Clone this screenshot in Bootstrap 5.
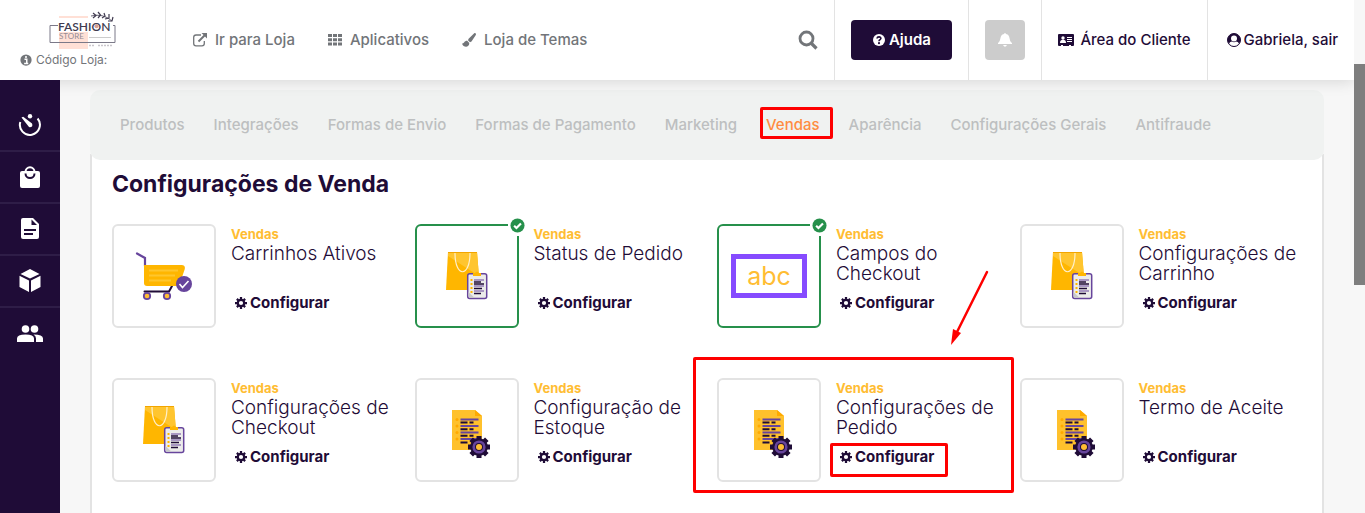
<!DOCTYPE html>
<html lang="pt-BR">
<head>
<meta charset="utf-8">
<meta name="viewport" content="width=device-width, initial-scale=1">
<title>Configurações de Venda</title>
<link href="https://cdn.jsdelivr.net/npm/bootstrap@5.3.0/dist/css/bootstrap.min.css" rel="stylesheet">
<style>
:root{--ink:#1f0c37;--grey:#727579;--line:#e3e3e3;--gold:#ffbd33;--mark:#fe0000}
body{font-family:Inter,"Open Sans",sans-serif;background:#f7f7f7;color:var(--ink);font-size:14px;line-height:20px}
a{text-decoration:none;color:inherit}
svg{flex:none;display:block}
.topbar{height:80px;background:#fff;box-shadow:0 2px 14px rgba(0,0,0,.13);z-index:2;font-size:15px;font-weight:500}
.cell{border-left:1px solid var(--line);padding:0 16px}
.brand-cell{width:165px;padding:10px 0 0 20px;color:var(--grey);font-size:12px;font-weight:400;line-height:20px}
.logo{margin-left:28px}
.top-links{color:var(--grey);gap:33px;padding-left:27px}
.btn-help{width:101px;height:40px;background:var(--ink);color:#fff;border-radius:4px;font-weight:600;border:0}
.btn-bell{width:40px;height:40px;background:#ccc;color:#fff;border-radius:4px;border:0}
.btn-plain{border:0;background:none;color:var(--grey);padding:0}
.client{gap:6px}
.user{gap:3px;padding-left:19px}
.rail{width:60px;background:var(--ink);color:#fff;padding-top:20px;z-index:3}
.rail a{height:52px;border-bottom:2px solid #2e1d47}
.rail a:last-child{border:0;height:52px}
.content-area{padding:10px 30px 0}
.tabs{height:70px;background:#f0f2f1;border-radius:10px;padding:0 30px;gap:29px;font-size:15px;font-weight:500;color:#bdbfc0;position:relative;z-index:1}
.tabs a{white-space:nowrap}
.tabs .active{color:#ff8c42}
.panel{margin-top:-6px;background:#fff;border:2px solid var(--line);border-top:0;border-bottom:0;padding:19px 20px 0}
.panel h1{font-size:23px;line-height:22px;font-weight:700;margin:0 0 29px}
.grid{--bs-gutter-x:20px;row-gap:50px}
.thumb{width:104px;height:104px;border:2px solid var(--line);border-radius:6px;flex:none}
.thumb.on{border-color:#26904b}
.tick{top:-8px;right:-8px;background:#fff;padding:0 0 3px 2px}
.info{padding-left:15px}
.kind{color:var(--gold);font-size:13px;font-weight:700;line-height:20px;display:block}
.name{font-size:19px;font-weight:300;line-height:20px;height:40px;margin:0}
.conf{font-size:15px;font-weight:700;gap:3px;margin:9px 0 0 4px}
.abc{width:76px;height:44px;border:5px solid #864bff;color:var(--gold);font-size:25px;line-height:34px}
.box{position:absolute;border:3px solid var(--mark);border-radius:2px;pointer-events:none}
.box-tab{inset:-8px -13px -4px -6px}
.box-card{inset:-21px -14px -11px -24px}
.box-conf{inset:-4px -14px -10px -10px}
.arrow{position:absolute;left:232px;top:-109px}
.track{width:11px;background:#f7f7f7}
.grip{height:43%;margin-top:64px;background:#7e7e7e}
</style>
</head>
<body>
<svg class="d-none">
<symbol id="cog" viewBox="0 0 16 16"><circle cx="8" cy="8" r="4.300" fill="none" stroke="currentColor" stroke-width="3"/><path d="M8 0v3.500M8 12.500V16M0 8h3.500M12.500 8H16M2.500 2.500l2.400 2.400M11.100 11.100l2.400 2.400M2.500 13.500l2.400-2.400M11.100 4.900l2.400-2.400" stroke="currentColor" stroke-width="3"/></symbol>
<symbol id="tick" viewBox="0 0 16 16"><circle cx="8" cy="8" r="7.500" fill="#26904b"/><path d="M4.400 8.200l2.500 2.500 4.800-4.900" fill="none" stroke="#fff" stroke-width="2.300"/></symbol>
<symbol id="cart" viewBox="0 0 58 50"><path d="M2 2.500l8 4.500v8" fill="none" stroke="#67459c" stroke-width="2.200" stroke-linecap="round"/><path d="M37 35l-3 5.500H9.500" fill="none" stroke="#1f0c37" stroke-width="2" stroke-linecap="round"/><path d="M9 14h37.500q4 0 3.300 4L44 35H12q-3 0-3-3z" fill="#ffb600"/><path d="M14 19.500h29M14 24.500h26M14 29.500h22" stroke="#ffc62d" stroke-width="2"/><g fill="#ffbd33" stroke="#67459c" stroke-width="1.800"><circle cx="12" cy="45" r="3.200"/><circle cx="32" cy="45" r="3.200"/></g><circle cx="49" cy="33" r="8" fill="#67459c"/><path d="M44.500 33l3 3.500 6-6.500" fill="none" stroke="#fff" stroke-width="1.600"/></symbol>
<symbol id="bag" viewBox="0 0 42 48"><path d="M2 0h29l3 38H0z" fill="#ffb600"/><path d="M2 0h29l2 24L2 4z" fill="#ffc52f"/><path d="M2 0h29v1H2z" fill="#f2a500"/><path d="M9 1c0 25 15 25 15 0" fill="none" stroke="#fff0cb" stroke-width="1.200"/><rect x="21.700" y="21.700" width="19" height="24.800" rx="2" fill="#ececea" stroke="#67459c" stroke-width="1.500"/><path d="M22.500 40v3.700q0 2 2 2h4z" fill="#c8c8ca"/><path d="M27 21h2q2-3 4 0h2v3h-8z" fill="#ffb600"/><path d="M28 28h10M28 34h10M28 39h10" stroke="#67459c"/><path d="M28 30h7M28 32h10M28 36.500h8M28 41.500h7" stroke="#1f0c37" stroke-width="1.300"/><path d="M24.500 28h2M24.500 32h2M24.500 36h2M24.500 40h2" stroke="#ffb600" stroke-width="1.800"/></symbol>
<symbol id="doc" viewBox="-8 -7 48 56"><path d="M1 1h23l7 6v34H1z" fill="#ffc12c"/><path d="M24 1v6h7z" fill="#ffaa00"/><path d="M9.500 10.500h18M9.500 17h18M9.500 23.500h18M9.500 30h18" stroke="#67459c" stroke-width="1.900"/><path d="M9.500 13.500h13M9.500 20.300h13M9.500 26.800h13M9.500 33.500h9" stroke="#1f0c37" stroke-width="1.900" stroke-dasharray="7 2 4 2"/><g fill="#ffaa00"><circle cx="6" cy="10.500" r="1.500"/><circle cx="6" cy="17" r="1.500"/><circle cx="6" cy="23.500" r="1.500"/><circle cx="6" cy="30" r="1.500"/></g><g stroke="#1f0c37" stroke-width="5"><path d="M28 27v22M17 38h22M20.200 30.200l15.600 15.600M20.200 45.800l15.600-15.600"/></g><circle cx="28" cy="38" r="8.800" fill="#1f0c37"/><circle cx="28" cy="38" r="5.300" fill="none" stroke="#67459c" stroke-width="2.600"/><circle cx="28" cy="38" r="3" fill="#ffbd33"/></symbol>
</svg>

<div class="d-flex vh-100 overflow-hidden">
<div class="d-flex flex-column flex-fill overflow-hidden">
  <header class="topbar d-flex position-relative flex-shrink-0">
    <div class="brand-cell">
      <svg class="logo" width="72" height="40" viewBox="0 0 72 40" role="img" aria-label="Fashion Store"><path d="M11 6h29v2H11zM11 22h29v17H11z" fill="#ffe0d6"/><path d="M10 15.500H2v17h65v-17h-2" fill="none" stroke="#7b7988"/><path d="M41 27.500h22" stroke="#ccc"/><text x="10" y="20.500" font-size="12" font-weight="600" fill="#403b50" font-family="Lato,sans-serif">FASHION</text><text x="11" y="29" font-size="8" fill="#948c94" font-family="Lato,sans-serif">STORE</text><circle cx="48.500" cy="16.300" r="2" fill="#d8a092"/><path d="M43 6q12-3 21 5" fill="none" stroke="#403b50" stroke-width=".8"/><path d="M45 3l3 2.500-3 2.500M50 2l2.500 3-2.500 3M56 3l1 3-3 2M61 4l0 4-4 1M65 7l-1 4-4 0" fill="none" stroke="#403b50" stroke-width="1.200"/><path d="M41 35.500h5M50 35.500h15" stroke="#c9c6cc" stroke-width="1.500" stroke-dasharray="2 1"/></svg>
      <div class="d-flex align-items-center gap-1"><svg width="12" height="12" viewBox="0 0 16 16"><circle cx="8" cy="8" r="7.500" fill="currentColor"/><path d="M6 7h3v5.500M5.500 12.500h5.500" stroke="#fff" stroke-width="2" fill="none"/><circle cx="8" cy="4" r="1.400" fill="#fff"/></svg><span>Código Loja:</span></div>
    </div>
    <nav class="cell top-links d-flex align-items-center flex-fill">
      <a href="#" class="d-flex align-items-center gap-2"><svg width="14" height="14" viewBox="0 0 14 14" fill="none" stroke="currentColor"><path d="M8 2H3Q.7 2 .7 4.300v6.200q0 2.300 2.300 2.300h6q2.300 0 2.300-2.300V8" stroke-width="1.300"/><path d="M5.500 8.500L12 2" stroke-width="2"/><path d="M8.500 0H14v5.500z" fill="currentColor" stroke="none"/></svg>Ir para Loja</a>
      <a href="#" class="d-flex align-items-center gap-2"><svg width="14" height="12" viewBox="0 0 14 12" fill="currentColor"><path d="M0 0h4v3H0zM5 0h4v3H5zM10 0h4v3h-4zM0 4.300h4v3H0zM5 4.300h4v3H5zM10 4.300h4v3h-4zM0 8.600h4v3H0zM5 8.600h4v3H5zM10 8.600h4v3h-4z"/></svg>Aplicativos</a>
      <a href="#" class="d-flex align-items-center gap-2"><svg width="14" height="14" viewBox="0 0 14 14" fill="currentColor"><path d="M12.500 0q2 0 1.300 2L9.500 8.500 8 9.300 6 7.300l.6-1.600zM5.200 7.800L7.300 10c0 5-6 5-7.300.5 2 .5 2-2.700 5.200-2.700z"/></svg>Loja de Temas</a>
      <button class="btn-plain ms-auto" aria-label="Buscar"><svg width="20" height="20" viewBox="0 0 20 20" fill="none" stroke="currentColor"><circle cx="8.500" cy="8.500" r="6.500" stroke-width="2.800"/><path d="M13 13l5.500 5.500" stroke-width="3.200"/></svg></button>
    </nav>
    <div class="cell d-flex align-items-center"><button class="btn-help d-flex align-items-center justify-content-center gap-1"><svg width="12" height="12" viewBox="0 0 16 16"><circle cx="8" cy="8" r="8" fill="#fff"/><path d="M5.300 6c.4-3.200 5.600-2.800 5.200 0C10.300 7.500 8 7.500 8 9.500" fill="none" stroke="#1f0c37" stroke-width="2.200"/><circle cx="8" cy="12.200" r="1.400" fill="#1f0c37"/></svg>Ajuda</button></div>
    <div class="cell d-flex align-items-center"><button class="btn-bell d-flex align-items-center justify-content-center" aria-label="Notificações"><svg width="14" height="14" viewBox="0 0 14 14" fill="#fff"><path d="M6 1q1-2 2 0c5 1 2.500 7 6 9v1H0v-1C3.500 8 1 2 6 1zM5 12h4q-2 3.500-4 0z"/></svg></button></div>
    <a href="#" class="cell client d-flex align-items-center"><svg width="16" height="12" viewBox="0 0 16 12"><rect width="16" height="12" rx="1" fill="#1f0c37"/><g fill="#fff"><circle cx="5" cy="4" r="1.700"/><path d="M2 9q0-3.300 3-3.300T8 9zM9 3h5v1H9zM9 5h5v1H9zM9 7h5v1H9zM3 11h2v1H3zM11 11h2v1h-2z"/></g></svg>Área do Cliente</a>
    <a href="#" class="cell user d-flex align-items-center"><svg width="14" height="14" viewBox="0 0 14 14"><circle cx="7" cy="7" r="6.500" fill="#1f0c37" stroke="#1f0c37"/><circle cx="7" cy="5.500" r="3" fill="#fff"/><path d="M2 10.500q1-2 3-2 2 1.300 4 0 2 0 3 2-2 2.500-5 2.500t-5-2.500z" fill="#fff"/></svg>Gabriela, sair</a>
  </header>

  <div class="d-flex flex-fill">
    <nav class="rail flex-shrink-0">
      <a href="#" class="d-flex align-items-center justify-content-center" aria-label="Painel"><svg width="24" height="24" viewBox="0 0 24 24"><path d="M2.300 9A10 10 0 1 0 19.600 5.500" fill="none" stroke="#fff" stroke-width="2"/><path d="M3.500 4.500l1.700-.7 8.800 6.700q1.500 4-3 3.600z" fill="#fff"/><circle cx="12" cy="3.200" r="2.200" fill="#fff"/></svg></a>
      <a href="#" class="d-flex align-items-center justify-content-center" aria-label="Pedidos"><svg width="22" height="24" viewBox="0 0 22 24"><rect x="1" y="6" width="20" height="17" rx="2" fill="#fff"/><path d="M6.500 7a4.500 4.800 0 0 1 9 0" fill="none" stroke="#fff" stroke-width="2"/><path d="M6.500 8.500a4.500 4.500 0 0 0 9 0" fill="none" stroke="#1f0c37" stroke-width="2"/></svg></a>
      <a href="#" class="d-flex align-items-center justify-content-center" aria-label="Relatórios"><svg width="18" height="22" viewBox="0 0 18 22"><path d="M2 0h10l6 6v13q0 2-2 2H2q-2 0-2-2V2q0-2 2-2z" fill="#fff"/><path d="M10.500 1.500L16 7h-5.500z" fill="#1f0c37"/><path d="M3 12h12M3 16h9" stroke="#1f0c37" stroke-width="2"/></svg></a>
      <a href="#" class="d-flex align-items-center justify-content-center" aria-label="Produtos"><svg width="22" height="24" viewBox="0 0 22 24" fill="#fff"><path d="M11 0l9.500 5L11 9.500 1.500 5zM.500 6.800l9.500 4.700V23L.500 18zM21.500 6.800L12 11.500V23l9.500-5z"/></svg></a>
      <a href="#" class="d-flex align-items-center justify-content-center" aria-label="Clientes"><svg width="26" height="18" viewBox="0 0 26 18" fill="#fff"><circle cx="8.500" cy="4" r="3.800"/><circle cx="17.500" cy="4" r="3.800"/><path d="M0 17v-3.500q0-4 8.500-4t8.500 4V17zM16.500 9.500q9.500 0 9.500 4V17h-7v-3.500q0-2.500-2.500-4z"/></svg></a>
    </nav>
    <main class="content-area flex-fill d-flex flex-column">
      <nav class="tabs d-flex align-items-center flex-shrink-0">
        <a href="#">Produtos</a><a href="#">Integrações</a><a href="#">Formas de Envio</a><a href="#">Formas de Pagamento</a><a href="#">Marketing</a><a href="#" class="active position-relative">Vendas<span class="box box-tab"></span></a><a href="#">Aparência</a><a href="#">Configurações Gerais</a><a href="#">Antifraude</a>
      </nav>
      <section class="panel flex-fill">
        <h1>Configurações de Venda</h1>
        <div class="row row-cols-4 grid">
          <div class="col"><article class="d-flex position-relative"><div class="thumb d-flex align-items-center justify-content-center"><svg width="58" height="50"><use href="#cart"/></svg></div><div class="info"><span class="kind">Vendas</span><h2 class="name">Carrinhos Ativos</h2><a href="#" class="conf d-inline-flex align-items-center position-relative"><svg width="12" height="12"><use href="#cog"/></svg>Configurar</a></div></article></div>
          <div class="col"><article class="d-flex position-relative"><div class="thumb on position-relative d-flex align-items-center justify-content-center"><svg width="42" height="48"><use href="#bag"/></svg><span class="tick position-absolute"><svg width="15" height="15"><use href="#tick"/></svg></span></div><div class="info"><span class="kind">Vendas</span><h2 class="name">Status de Pedido</h2><a href="#" class="conf d-inline-flex align-items-center position-relative"><svg width="12" height="12"><use href="#cog"/></svg>Configurar</a></div></article></div>
          <div class="col"><article class="d-flex position-relative"><div class="thumb on position-relative d-flex align-items-center justify-content-center"><div class="abc text-center">abc</div><span class="tick position-absolute"><svg width="15" height="15"><use href="#tick"/></svg></span></div><div class="info"><span class="kind">Vendas</span><h2 class="name">Campos do Checkout</h2><a href="#" class="conf d-inline-flex align-items-center position-relative"><svg width="12" height="12"><use href="#cog"/></svg>Configurar</a></div></article></div>
          <div class="col"><article class="d-flex position-relative"><div class="thumb d-flex align-items-center justify-content-center"><svg width="42" height="48"><use href="#bag"/></svg></div><div class="info"><span class="kind">Vendas</span><h2 class="name">Configurações de Carrinho</h2><a href="#" class="conf d-inline-flex align-items-center position-relative"><svg width="12" height="12"><use href="#cog"/></svg>Configurar</a></div></article></div>
          <div class="col"><article class="d-flex position-relative"><div class="thumb d-flex align-items-center justify-content-center"><svg width="42" height="48"><use href="#bag"/></svg></div><div class="info"><span class="kind">Vendas</span><h2 class="name">Configurações de Checkout</h2><a href="#" class="conf d-inline-flex align-items-center position-relative"><svg width="12" height="12"><use href="#cog"/></svg>Configurar</a></div></article></div>
          <div class="col"><article class="d-flex position-relative"><div class="thumb d-flex align-items-center justify-content-center"><svg width="48" height="56"><use href="#doc"/></svg></div><div class="info"><span class="kind">Vendas</span><h2 class="name">Configuração de Estoque</h2><a href="#" class="conf d-inline-flex align-items-center position-relative"><svg width="12" height="12"><use href="#cog"/></svg>Configurar</a></div></article></div>
          <div class="col"><article class="d-flex position-relative"><div class="thumb d-flex align-items-center justify-content-center"><svg width="48" height="56"><use href="#doc"/></svg></div><div class="info"><span class="kind">Vendas</span><h2 class="name">Configurações de Pedido</h2><a href="#" class="conf d-inline-flex align-items-center position-relative"><svg width="12" height="12"><use href="#cog"/></svg>Configurar<span class="box box-conf"></span></a></div><span class="box box-card"></span><svg class="arrow" width="40" height="78" viewBox="0 0 40 78"><path d="M38 3L7 65" stroke="#fe0000" stroke-width="2.500" stroke-linecap="round"/><path d="M2 76L4 60l8 4z" fill="#fe0000"/></svg></article></div>
          <div class="col"><article class="d-flex position-relative"><div class="thumb d-flex align-items-center justify-content-center"><svg width="48" height="56"><use href="#doc"/></svg></div><div class="info"><span class="kind">Vendas</span><h2 class="name">Termo de Aceite</h2><a href="#" class="conf d-inline-flex align-items-center position-relative"><svg width="12" height="12"><use href="#cog"/></svg>Configurar</a></div></article></div>
        </div>
      </section>
    </main>
  </div>
</div>
<div class="track flex-shrink-0 d-flex flex-column" aria-hidden="true"><div class="grip"></div></div>
</div>
<script src="https://cdn.jsdelivr.net/npm/bootstrap@5.3.0/dist/js/bootstrap.bundle.min.js"></script>
</body>
</html>
